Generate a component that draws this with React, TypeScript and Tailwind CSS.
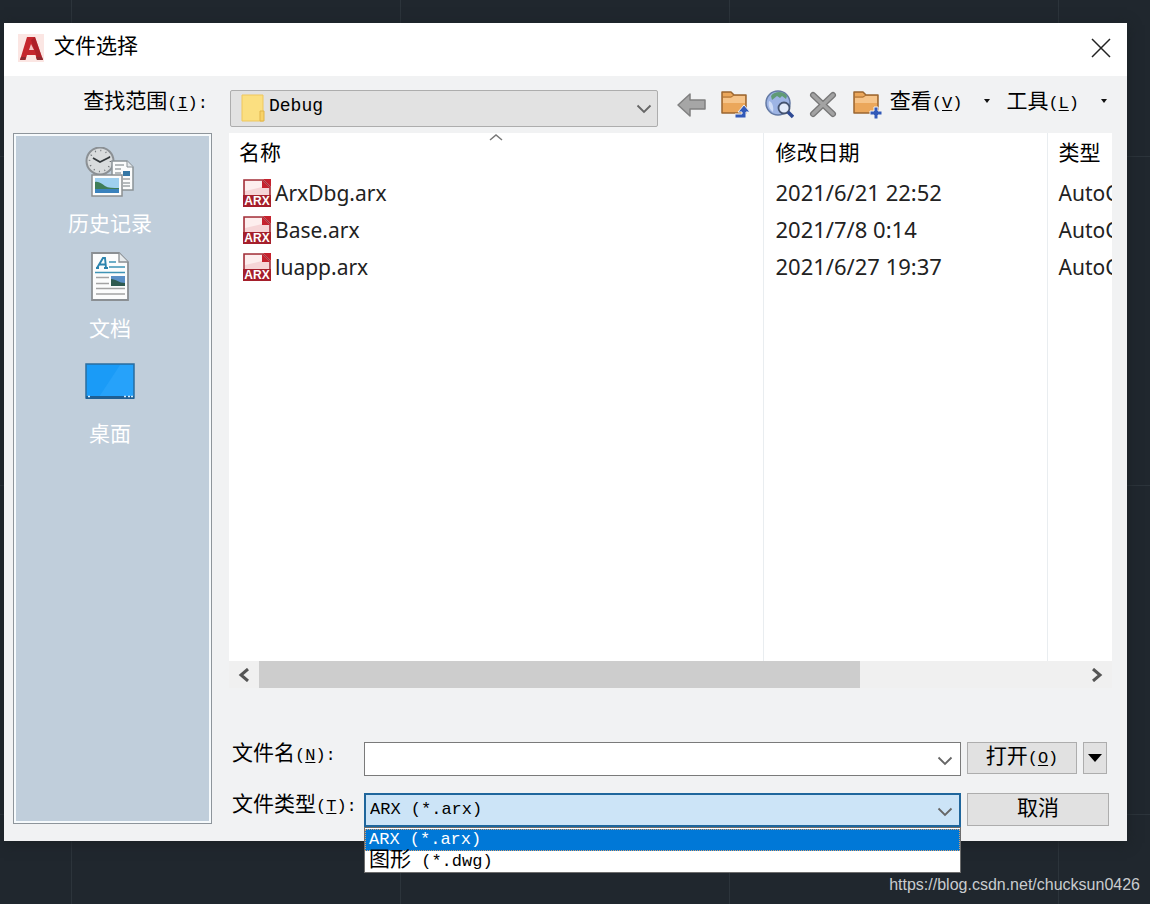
import { useState, type ReactNode } from "react";

const mono = "font-['Liberation_Mono','Noto_Sans_CJK_SC',monospace]";

const places = [
  { label: "历史记录", icon: <HistoryIcon /> },
  { label: "文档", icon: <DocumentIcon /> },
  { label: "桌面", icon: <DesktopIcon /> },
];

const files = [
  { name: "ArxDbg.arx", date: "2021/6/21 22:52", type: "AutoC" },
  { name: "Base.arx", date: "2021/7/8 0:14", type: "AutoC" },
  { name: "luapp.arx", date: "2021/6/27 19:37", type: "AutoC" },
];

const fileTypes = [
  { value: "arx", name: "ARX", pattern: " (*.arx)" },
  { value: "dwg", name: "图形", pattern: " (*.dwg)" },
];

function HistoryIcon() {
  return (
    <svg viewBox="0 0 50 50" className="h-[50px] w-[50px]" aria-hidden="true">
      <circle cx="15" cy="14" r="13.5" fill="#d9dcdd" stroke="#8b9094" strokeWidth="2" />
      <circle cx="15" cy="14" r="10.5" fill="none" stroke="#6f7478" strokeWidth="1.6" strokeDasharray="1 4.5" />
      <path d="M8 11l7 4 10-5" fill="none" stroke="#33383b" strokeWidth="1.8" />
      <path d="M27 14h15l6 6v23H27z" fill="#fbfcfc" stroke="#8b9297" strokeWidth="1.5" />
      <path d="M42 14v6h6" fill="#e3e8eb" stroke="#8b9297" />
      <path d="M30 18h9M30 22h6M30 26h6M38 32h7M38 36h7M38 39h7" stroke="#a0a5a8" strokeWidth="1.5" />
      <rect x="38" y="24" width="7" height="5" fill="#3577a5" />
      <rect x="7" y="28" width="30" height="21" fill="#fcfdfd" stroke="#8b8f91" strokeWidth="1.5" />
      <rect x="10" y="31" width="24" height="15" fill="#9fd0f0" />
      <path d="M10 35c4-1 7 2 10 4s8 2 14 2v2H10z" fill="#3f7d57" />
      <path d="M10 42h24v4H10z" fill="#3a82bd" />
    </svg>
  );
}

function DocumentIcon() {
  return (
    <svg viewBox="0 0 50 50" className="h-[50px] w-[50px]" aria-hidden="true">
      <path d="M7 1h27l9 9v38H7z" fill="#fbfcfc" stroke="#8a8f93" strokeWidth="1.8" />
      <path d="M34 1v9h9" fill="#e6eaec" stroke="#8a8f93" strokeWidth="1.3" />
      <path d="M12 16l6-10h2l1 10M14 12.500h6M11 16h3M19 16h4" fill="none" stroke="#2b83ad" strokeWidth="1.900" />
      <path d="M24 10h7M24 15h16M10 20.500h30" stroke="#3e93b5" strokeWidth="1.700" />
      <path d="M11 25.500h13M11 31.500h13M11 36.500h29M11 42h29" stroke="#a3a3a3" strokeWidth="1.500" />
      <rect x="26" y="24" width="14" height="10" fill="#5a8fc6" />
      <path d="M26 27c5 0 8 4 14 4v3H26z" fill="#2f5b50" />
    </svg>
  );
}

function DesktopIcon() {
  return (
    <svg viewBox="0 0 50 50" className="h-[50px] w-[50px]" aria-hidden="true">
      <rect x="1" y="7" width="48" height="34" fill="#1a9bf7" stroke="#2b6d9f" strokeWidth="1.500" />
      <path d="M14 40L35 8h13v32z" fill="#26a2fa" />
      <path d="M1 39h48v3H1z" fill="#1f5f93" />
      <path d="M3 39.500h2M39 39.500h2M43 39.500h2M46 39.500h2" stroke="#d7ecfa" strokeWidth="1.500" />
    </svg>
  );
}

function ArxIcon() {
  return (
    <svg viewBox="0 0 28 28" className="h-7 w-7 shrink-0" aria-hidden="true">
      <path d="M1 1h19l7 7v19H1z" fill="#f6d5d7" stroke="#a3303a" strokeWidth="1.600" />
      <path d="M2 2h17v6L2 12z" fill="#fdeeee" />
      <path d="M19 1l8 8h-8z" fill="#c5222e" />
      <path d="M20 0h8v8z" fill="#c5222e" />
      <path d="M0 16h28v12H0z" fill="#a51f2b" />
      <text x="14" y="26" textAnchor="middle" fontSize="12" fontWeight="700" fill="#fff" className="font-['Liberation_Sans',sans-serif]">
        ARX
      </text>
    </svg>
  );
}

function AppLogo() {
  return (
    <svg viewBox="0 0 26 28" className="h-7 w-[26px]" aria-hidden="true">
      <rect width="26" height="28" fill="#fbe6e3" />
      <path d="M9 3h8l8 23h-6l-1.500-5H9l-1.500 5H2z" fill="#c5262d" />
      <path d="M13 10l-2 6h5z" fill="#f3c6c4" />
      <path d="M17 3l8 23h-5L13 6z" fill="#9c1c24" opacity="0.600" />
      <path d="M3 23h5l-1 3H2zM18 23h6l1 3h-6z" fill="#8c2a30" />
    </svg>
  );
}

function BackIcon() {
  return (
    <svg viewBox="0 0 30 30" className="h-[30px] w-[30px]" aria-hidden="true">
      <path d="M2 16L14 5v6h15v9H14v7z" fill="#a6a6a6" stroke="#808080" strokeWidth="1.500" strokeLinejoin="round" />
    </svg>
  );
}

function FolderShape() {
  return (
    <>
      <path d="M2 3h9l3 3h12v18H2z" fill="#eba75b" stroke="#9a6630" strokeWidth="1.500" strokeLinejoin="round" />
      <path d="M3 9h8l3-2h11v7H3z" fill="#f6c489" />
      <path d="M2 8h9l3-2" fill="none" stroke="#a87138" />
    </>
  );
}

function FolderUpIcon() {
  return (
    <svg viewBox="0 0 30 30" className="h-[30px] w-[30px]" aria-hidden="true">
      <FolderShape />
      <path d="M24 16l6 7h-4v6H15v-4h7v-2h-4z" fill="#3159b8" stroke="#f1f2f4" />
    </svg>
  );
}

function FolderNewIcon() {
  return (
    <svg viewBox="0 0 30 30" className="h-[30px] w-[30px]" aria-hidden="true">
      <FolderShape />
      <path d="M22 18h4v4h4v4h-4v4h-4v-4h-4v-4h4z" fill="#3159b8" stroke="#f1f2f4" />
    </svg>
  );
}

function SearchWebIcon() {
  return (
    <svg viewBox="0 0 30 30" className="h-[30px] w-[30px]" aria-hidden="true">
      <circle cx="14" cy="14" r="12" fill="#9db4e4" stroke="#6379a3" strokeWidth="1.500" />
      <path d="M7 7c2-3 5-4 8-4s6 1 8 4l-1 3-4-3-2 2-3-2-5 4z" fill="#5f9a75" />
      <path d="M5 12c3 1 5 5 4 11-4-3-5-7-4-11z" fill="#cfdcf6" />
      <circle cx="20" cy="19" r="5.500" fill="#e3ebfa" stroke="#44536f" strokeWidth="1.800" />
      <path d="M24 23l5 5" stroke="#2e4a94" strokeWidth="3.500" />
    </svg>
  );
}

function DeleteIcon() {
  return (
    <svg viewBox="0 0 30 30" className="h-[30px] w-[30px]" aria-hidden="true">
      <path d="M5 6l20 19M25 6L5 25" stroke="#777" strokeWidth="6" strokeLinecap="round" />
      <path d="M5 6l20 19M25 6L5 25" stroke="#a3a3a3" strokeWidth="3.500" strokeLinecap="round" />
    </svg>
  );
}

function FolderIcon() {
  return (
    <svg viewBox="0 0 24 28" className="h-7 w-6" aria-hidden="true">
      <path d="M1 1h21v26H1z" fill="#fbdf80" stroke="#efc75c" />
      <path d="M19 17h4v10h-4z" fill="#f8d268" stroke="#e0b44a" />
    </svg>
  );
}

function Chevron() {
  return (
    <svg viewBox="0 0 16 10" className="h-[10px] w-4" aria-hidden="true">
      <path d="M1.500 1.500L8 8l6.500-6.500" fill="none" stroke="#666" strokeWidth="1.800" />
    </svg>
  );
}

// CJK text followed by a shortcut key in brackets
function Caption({ text, hotkey, colon }: { text: string; hotkey: string; colon?: boolean }) {
  return (
    <span className="whitespace-nowrap text-[21px] leading-[26px] text-black">
      {text}
      <span className="text-[17px]">
        (<span className="underline underline-offset-2">{hotkey}</span>){colon ? ":" : ""}
      </span>
    </span>
  );
}

function ToolButton({ label, children }: { label: string; children: ReactNode }) {
  return (
    <button type="button" aria-label={label} className="shrink-0">
      {children}
    </button>
  );
}

function MenuButton({ text, hotkey }: { text: string; hotkey: string }) {
  return (
    <button type="button" className="flex shrink-0 items-center gap-[22px] pb-[6px]">
      <Caption text={text} hotkey={hotkey} />
      <svg viewBox="0 0 6 4" className="mb-1 h-1 w-[6px]" aria-hidden="true">
        <path d="M0 0h6L3 4z" fill="#111" />
      </svg>
    </button>
  );
}

export default function App() {
  const [fileName, setFileName] = useState("");
  const [fileType, setFileType] = useState("arx");

  return (
    <div
      className={`flex min-h-screen flex-col bg-[#20272e] bg-[linear-gradient(to_right,#2c343b_1px,transparent_1px),linear-gradient(to_bottom,#2c343b_1px,transparent_1px)] bg-[length:329px_329px] bg-[position:71px_156px] pl-1 pt-[23px] ${mono}`}
    >
      <main className="mr-[23px] flex flex-1 flex-col bg-[#f1f2f3] shadow-[0_2px_12px_#1a2124]">
        <header className="flex h-[53px] items-center bg-white pb-1 pl-[14px] pr-4">
          <AppLogo />
          <h1 className="ml-[10px] flex-1 text-[21px] leading-[26px] text-black">文件选择</h1>
          <button type="button" aria-label="关闭">
            <svg viewBox="0 0 20 20" className="h-5 w-5" aria-hidden="true">
              <path d="M1 1l18 18M19 1L1 19" stroke="#222" strokeWidth="1.500" />
            </svg>
          </button>
        </header>

        <div className="flex h-[57px] items-center pr-5 pt-[7px]">
          <label htmlFor="folder" className="w-[204px] pb-[10px] text-right">
            <Caption text="查找范围" hotkey="I" colon />
          </label>
          <div className="relative ml-[22px] flex-1">
            <select
              id="folder"
              className="block h-[37px] w-full appearance-none rounded-[2px] border border-[#adadad] bg-[#e2e2e2] pb-1 pl-[38px] text-[18px] text-black"
            >
              <option>Debug</option>
            </select>
            <span className="pointer-events-none absolute left-[11px] top-1">
              <FolderIcon />
            </span>
            <span className="pointer-events-none absolute right-[6px] top-[14px]">
              <Chevron />
            </span>
          </div>
          <div className="ml-[18px] flex items-center gap-[14px] pb-2">
            <ToolButton label="后退"><BackIcon /></ToolButton>
            <ToolButton label="上一级"><FolderUpIcon /></ToolButton>
            <ToolButton label="搜索 Web"><SearchWebIcon /></ToolButton>
            <ToolButton label="删除"><DeleteIcon /></ToolButton>
            <ToolButton label="新建文件夹"><FolderNewIcon /></ToolButton>
          </div>
          <div className="ml-2 flex gap-4 pb-1">
            <MenuButton text="查看" hotkey="V" />
            <MenuButton text="工具" hotkey="L" />
          </div>
        </div>

        <div className="flex flex-1 pl-[9px] pr-[15px]">
          <nav className="mb-[17px] w-[199px] shrink-0 border border-[#8e959b] bg-[#f6fafc] p-[2px]">
            <div className="flex h-full flex-col items-center bg-[#c0cedb] pr-[5px] pt-[11px]">
              {places.map((place) => (
                <button key={place.label} type="button" className="flex h-[105px] flex-col items-center gap-[14px]">
                  {place.icon}
                  <span className="text-[21px] leading-[30px] text-white">{place.label}</span>
                </button>
              ))}
            </div>
          </nav>

          <section className="ml-[17px] flex min-w-0 flex-1 flex-col">
            <div className="flex flex-1 bg-white">
              <table className="w-full table-fixed border-collapse font-['Noto_Sans','Noto_Sans_CJK_SC',sans-serif] text-[21px] leading-[26px] text-[#222]">
                <colgroup>
                  <col />
                  <col className="w-[284px]" />
                  <col className="w-[65px]" />
                </colgroup>
                <thead>
                  <tr className="h-[41px] text-left text-black">
                    <th className="relative border-r border-[#e9edf0] pb-[3px] pl-[10px] font-normal">
                      名称
                      <svg viewBox="0 0 14 8" className="absolute inset-x-0 top-0 mx-auto h-2 w-[14px]" aria-hidden="true">
                        <path d="M1 7l6-5 6 5" fill="none" stroke="#777" strokeWidth="1.500" />
                      </svg>
                    </th>
                    <th className="border-r border-[#e9edf0] pb-[3px] pl-3 font-normal">修改日期</th>
                    <th className="pb-[3px] pl-[11px] font-normal">类型</th>
                  </tr>
                </thead>
                <tbody>
                  {files.map((file) => (
                    <tr key={file.name} className="h-[37px]">
                      <td className="border-r border-[#e9edf0] pl-[14px]">
                        <div className="flex items-center gap-1">
                          <ArxIcon />
                          {file.name}
                        </div>
                      </td>
                      <td className="border-r border-[#e9edf0] pb-[2px] pl-3 text-[22px]">{file.date}</td>
                      <td className="overflow-hidden pl-[11px]">{file.type}</td>
                    </tr>
                  ))}
                  <tr aria-hidden="true">
                    <td className="border-r border-[#e9edf0]" />
                    <td className="border-r border-[#e9edf0]" />
                    <td />
                  </tr>
                </tbody>
              </table>
            </div>

            <div className="flex h-[27px] items-center bg-[#f0f0f0]">
              <button type="button" aria-label="向左滚动" className="flex w-[30px] justify-center">
                <svg viewBox="0 0 12 14" className="h-[14px] w-3" aria-hidden="true">
                  <path d="M10 1L3 7l7 6" fill="none" stroke="#555" strokeWidth="3" />
                </svg>
              </button>
              <div className="h-full flex-1">
                <div className="h-full w-[73%] bg-[#cdcdcd]" />
              </div>
              <button type="button" aria-label="向右滚动" className="flex w-[30px] justify-center">
                <svg viewBox="0 0 12 14" className="h-[14px] w-3" aria-hidden="true">
                  <path d="M2 1l7 6-7 6" fill="none" stroke="#555" strokeWidth="3" />
                </svg>
              </button>
            </div>

            <form className="mb-[14px] mr-[3px] mt-[54px] grid grid-cols-[129px_1fr_142px] gap-x-[6px] gap-y-[17px]">
              <label htmlFor="file-name" className="pl-[3px]">
                <Caption text="文件名" hotkey="N" colon />
              </label>
              <div className="relative">
                <input
                  id="file-name"
                  type="text"
                  value={fileName}
                  onChange={(e) => setFileName(e.target.value)}
                  className="block h-[34px] w-full border border-[#7a7a7a] bg-white pl-[6px] pr-8 text-[17px] text-black outline-none"
                />
                <button type="button" aria-label="最近的文件" className="absolute right-2 top-[14px]">
                  <Chevron />
                </button>
              </div>
              <div className="flex gap-[6px]">
                <button type="button" className="h-8 flex-1 border border-[#adadad] bg-[#e1e1e1]">
                  <Caption text="打开" hotkey="O" />
                </button>
                <button
                  type="button"
                  aria-label="打开选项"
                  className="mr-[2px] flex h-8 w-6 items-center justify-center border border-[#adadad] bg-[#e1e1e1]"
                >
                  <svg viewBox="0 0 14 8" className="h-2 w-[14px]" aria-hidden="true">
                    <path d="M0 0h14L7 8z" fill="#000" />
                  </svg>
                </button>
              </div>

              <label htmlFor="file-type" className="pl-[3px]">
                <Caption text="文件类型" hotkey="T" colon />
              </label>
              <div className="relative">
                <select
                  id="file-type"
                  value={fileType}
                  onChange={(e) => setFileType(e.target.value)}
                  className="block h-[34px] w-full appearance-none border-2 border-[#1f669c] bg-[#cce4f7] pl-1 text-[17px] text-black outline-none"
                >
                  {fileTypes.map((t) => (
                    <option key={t.value} value={t.value}>
                      {t.name + t.pattern}
                    </option>
                  ))}
                </select>
                <span className="pointer-events-none absolute right-2 top-[14px]">
                  <Chevron />
                </span>
                <ul
                  role="listbox"
                  aria-label="文件类型"
                  className="absolute inset-x-0 top-full z-10 border border-[#6d6d6d] bg-white pt-px"
                >
                  {fileTypes.map((t) => (
                    <li
                      key={t.value}
                      role="option"
                      aria-selected={t.value === fileType}
                      onClick={() => setFileType(t.value)}
                      className={
                        t.value === fileType
                          ? "h-[22px] whitespace-pre border border-dotted border-[#d8a070] bg-[#0078d7] pl-[3px] text-[17px] leading-5 text-white"
                          : "h-[21px] whitespace-pre pl-1 text-[21px] leading-5 text-black"
                      }
                    >
                      {t.name}
                      <span className="text-[17px]">{t.pattern}</span>
                    </li>
                  ))}
                </ul>
              </div>
              <button type="button" className="h-[33px] border border-[#adadad] bg-[#e1e1e1] text-[21px] leading-[26px] text-black">
                取消
              </button>
            </form>
          </section>
        </div>
      </main>

      <footer className="flex h-[63px] items-end justify-end pb-[7px] pr-[10px]">
        <a
          href="https://blog.csdn.net/chucksun0426"
          className="font-['Liberation_Sans',sans-serif] text-[16px] leading-6 text-[#c9cccf]"
        >
          https://blog.csdn.net/chucksun0426
        </a>
      </footer>
    </div>
  );
}
